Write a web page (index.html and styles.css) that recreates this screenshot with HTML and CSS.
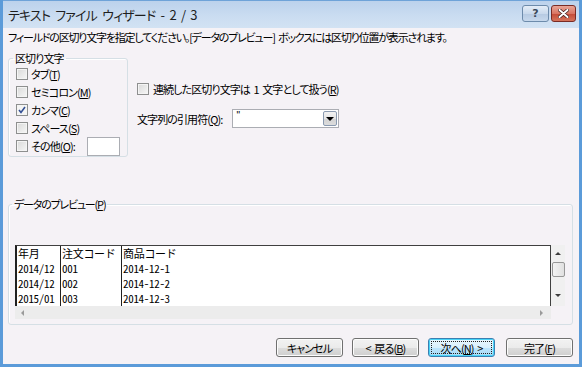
FILE: index.html
```html
<!DOCTYPE html>
<html lang="ja">
<head>
    <meta charset="UTF-8">
    <title>テキスト ファイル ウィザード - 2 / 3</title>
    <link rel="stylesheet" href="styles.css">
</head>
<body>
    <div class="window">
        <div class="titlebar">
            <span class="title">テキスト ファイル ウィザード - 2 / 3</span>
            <div class="caption-buttons">
                <button class="cap help">?</button>
                <button class="cap close">
                    <svg width="11" height="9" viewBox="0 0 11 9"><path d="M1.5 1 L9.5 8 M9.5 1 L1.5 8" stroke="#3a1a1a" stroke-width="3.4" stroke-linecap="round"/><path d="M1.5 1 L9.5 8 M9.5 1 L1.5 8" stroke="#fff" stroke-width="2" stroke-linecap="round"/></svg>
                </button>
            </div>
        </div>

        <div class="client">
            <p class="intro">フィールドの区切り文字を指定してください。[データのプレビュー] ボックスには区切り位置が表示されます。</p>

            <div class="top-row">
                <fieldset class="group delims">
                    <legend>区切り文字</legend>
                    <label class="check-row"><span class="check"></span>タブ(<u>T</u>)</label>
                    <label class="check-row"><span class="check"></span>セミコロン(<u>M</u>)</label>
                    <label class="check-row"><span class="check checked"></span>カンマ(<u>C</u>)</label>
                    <label class="check-row"><span class="check"></span>スペース(<u>S</u>)</label>
                    <label class="check-row"><span class="check"></span>その他(<u>O</u>):<span class="textbox"></span></label>
                </fieldset>

                <div class="options">
                    <label class="check-row"><span class="check"></span>連続した区切り文字は 1 文字として扱う(<u>R</u>)</label>
                    <div class="quote-row">
                        <span>文字列の引用符(<u>Q</u>):</span>
                        <div class="combo">
                            <span class="combo-text">"</span>
                            <span class="combo-btn"><span class="arrow-down"></span></span>
                        </div>
                    </div>
                </div>
            </div>

            <fieldset class="group preview">
                <legend>データのプレビュー(<u>P</u>)</legend>
                <div class="listbox">
                    <div class="list-main">
                        <div class="list-area">
                            <div class="grid">
                                <span>年月</span><span>注文コード</span><span>商品コード</span>
                                <span>2014/12</span><span>001</span><span>2014-12-1</span>
                                <span>2014/12</span><span>002</span><span>2014-12-2</span>
                                <span>2015/01</span><span>003</span><span>2014-12-3</span>
                            </div>
                        </div>
                        <div class="hscroll">
                            <span class="tri-left"></span>
                            <span class="tri-right"></span>
                        </div>
                    </div>
                    <div class="vscroll">
                        <span class="tri-up"></span>
                        <span class="thumb"></span>
                        <span class="tri-down"></span>
                    </div>
                </div>
            </fieldset>

            <div class="buttons">
                <button class="btn">キャンセル</button>
                <button class="btn">&lt; 戻る(<u>B</u>)</button>
                <button class="btn default"><span class="focus">次へ(<u>N</u>) &gt;</span></button>
                <button class="btn">完了(<u>F</u>)</button>
            </div>
        </div>
    </div>
</body>
</html>
```

FILE: styles.css
```css
* {
    box-sizing: border-box;
}
body {
    margin: 0;
    font-family: "Noto Sans CJK JP", "Noto Sans", sans-serif;
    font-size: 11px;
    font-feature-settings: "palt";
    letter-spacing: -0.9px;
    word-spacing: 2px;
    color: #000;
    background: #fff;
}
u {
    text-decoration: underline;
    text-underline-offset: 1px;
}
.window {
    width: 582px;
    height: 367px;
    display: flex;
    flex-direction: column;
    border: 3px solid #5b9bd9;
    border-top: 0;
    box-shadow: inset 1px 0 0 #2d6aa8, inset -1px 0 0 #2d6aa8, inset 0 -1px 0 #2d6aa8;
    background: #c6daf0;
}
.titlebar {
    height: 28px;
    display: flex;
    align-items: center;
    justify-content: space-between;
    padding: 0 3px 0 5px;
    background: linear-gradient(#bcd2ec, #cbddf1 60%, #d2e2f3);
    border-top: 1px solid #6fa3d8;
}
.title {
    font-size: 13px;
    letter-spacing: -0.8px;
    word-spacing: 3px;
    color: #1e1e1e;
}
.caption-buttons {
    display: flex;
    gap: 2px;
    margin-top: -3px;
}
.cap {
    height: 17px;
    border: 1px solid #6d8bab;
    border-radius: 3px;
    padding: 0;
    display: flex;
    align-items: center;
    justify-content: center;
    letter-spacing: 0;
}
.help {
    width: 27px;
    background: linear-gradient(#e4edf7, #c9d9ec 50%, #b5c9e1 51%, #c7d8ec);
    font-family: "DejaVu Sans", sans-serif;
    font-weight: bold;
    font-size: 11px;
    color: #3b4a5c;
}
.close {
    width: 25px;
    border-color: #7a2b24;
    background: linear-gradient(#e8a597, #d97563 50%, #c44a36 51%, #d5735b);
}
.client {
    flex: 1;
    display: flex;
    flex-direction: column;
    padding: 2px 6px 6px 5px;
    background: #f5f2f6;
}
.intro {
    margin: 0;
    line-height: 14px;
    letter-spacing: -1.2px;
}
.top-row {
    display: flex;
    margin-top: 7px;
}
.group {
    margin: 0;
    border: 1px solid #d5dfe5;
    border-radius: 3px;
    box-shadow: inset 1px 1px 0 #fff;
}
.group legend {
    padding: 0 2px;
    line-height: 14px;
}
.delims {
    width: 120px;
    height: 106px;
    padding: 0 0 0 7px;
}
.delims legend {
    margin-left: -3px;
}
.check-row {
    display: flex;
    align-items: center;
    height: 18px;
    white-space: nowrap;
}
.check {
    width: 12px;
    height: 12px;
    margin-right: 3px;
    border: 1px solid #8e8f8f;
    background: linear-gradient(135deg, #d9d9d9, #f7f7f7);
    box-shadow: inset 0 0 0 1px #f4f4f4;
    flex: none;
}
.check.checked {
    background: #f4f4f4 url("data:image/svg+xml,%3Csvg xmlns='http://www.w3.org/2000/svg' width='10' height='10'%3E%3Cpath d='M2 5 L4 7.5 L8 2' fill='none' stroke='%23334f94' stroke-width='1.6'/%3E%3C/svg%3E") center no-repeat;
}
.textbox {
    width: 33px;
    height: 19px;
    margin-left: 12px;
    border: 1px solid #abadb3;
    background: #fff;
}
.options {
    margin: 30px 0 0 9px;
}
.options .check-row {
    height: 16px;
}
.options .check {
    margin-right: 4px;
}
.quote-row {
    display: flex;
    align-items: center;
    margin-top: 12px;
}
.combo {
    width: 107px;
    height: 19px;
    margin-left: 10px;
    display: flex;
    justify-content: space-between;
    border: 1px solid #abadb3;
    background: #fff;
}
.combo-text {
    padding: 1px 0 0 3px;
    font-family: "Liberation Sans", sans-serif;
    font-size: 10px;
    line-height: 10px;
    letter-spacing: 0;
    color: #000;
}
.combo-btn {
    width: 14px;
    margin: 1px;
    display: flex;
    align-items: center;
    justify-content: center;
    border: 1px solid #8a9ab0;
    border-radius: 2px;
    background: linear-gradient(#f2f2f2, #e4e4e4 50%, #d3d3d3 51%, #dcdcdc);
}
.arrow-down {
    border-left: 4px solid transparent;
    border-right: 4px solid transparent;
    border-top: 4px solid #000;
}
.preview {
    margin-top: 40px;
    padding: 34px 7px 5px 6px;
}
.preview legend {
    margin-left: -3px;
    letter-spacing: -1.2px;
}
.listbox {
    display: flex;
    height: 74px;
}
.list-main {
    flex: 1;
    display: flex;
    flex-direction: column;
}
.list-area {
    flex: 1;
    background: #fff;
    border: 1px solid #404040;
    border-left: 2px solid #202020;
    border-bottom: 0;
    overflow: hidden;
}
.grid {
    display: grid;
    grid-template-columns: 44px 61px 1fr;
    grid-auto-rows: 15px;
    font-size: 11px;
    line-height: 15px;
    letter-spacing: -0.3px;
    font-feature-settings: "hwid";
}
.grid span {
    padding-left: 1px;
    white-space: nowrap;
}
.grid span:nth-child(3n+1),
.grid span:nth-child(3n+2) {
    border-right: 1px solid #202020;
}
.hscroll {
    height: 13px;
    display: flex;
    align-items: center;
    justify-content: space-between;
    padding: 0 8px 0 6px;
    background: #ececec;
}
.tri-left {
    border-top: 3px solid transparent;
    border-bottom: 3px solid transparent;
    border-right: 3px solid #9a9a9a;
}
.tri-right {
    border-top: 3px solid transparent;
    border-bottom: 3px solid transparent;
    border-left: 3px solid #9a9a9a;
}
.vscroll {
    width: 14px;
    height: 61px;
    display: flex;
    flex-direction: column;
    align-items: center;
    padding-top: 7px;
    background: #f0f0f0;
}
.tri-up {
    border-left: 3px solid transparent;
    border-right: 3px solid transparent;
    border-bottom: 3px solid #3c3c3c;
}
.thumb {
    width: 13px;
    height: 15px;
    margin-top: 7px;
    border: 1px solid #979797;
    border-radius: 2px;
    background: linear-gradient(90deg, #f3f3f3, #e0e0e0);
}
.tri-down {
    margin-top: 17px;
    border-left: 3px solid transparent;
    border-right: 3px solid transparent;
    border-top: 3px solid #3c3c3c;
}
.buttons {
    display: flex;
    justify-content: flex-end;
    gap: 9px;
    margin-top: 13px;
}
.btn {
    width: 67px;
    height: 19px;
    padding: 0;
    font-family: inherit;
    font-size: 11px;
    font-feature-settings: "palt";
    letter-spacing: -0.9px;
    word-spacing: 2px;
    border: 1px solid #707070;
    border-radius: 3px;
    background: linear-gradient(#f2f2f2, #ebebeb 50%, #dddddd 51%, #cfcfcf);
    box-shadow: inset 0 0 0 1px #fcfcfc;
}
.btn:last-child {
    margin-left: 2px;
}
.btn.default {
    border-color: #3c7fb1;
    box-shadow: inset 0 0 0 1px #48d4f8;
    background: linear-gradient(#eaf6fd, #d9f0fc 50%, #bee6fd 51%, #a7d9f5);
    padding: 2px;
}
.focus {
    display: block;
    height: 100%;
    line-height: 13px;
    border: 1px dotted #222;
}
```
